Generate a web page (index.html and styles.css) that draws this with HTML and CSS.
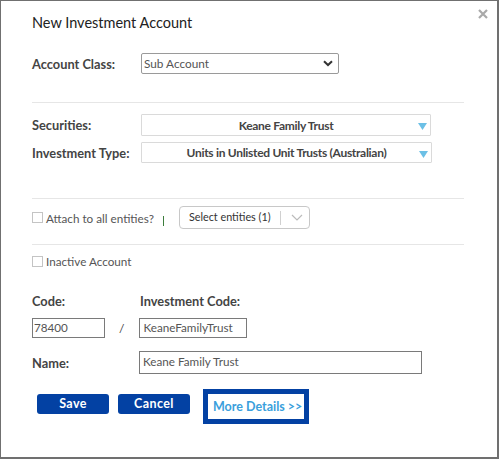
FILE: index.html
```html
<!DOCTYPE html>
<html>
<head>
<meta charset="utf-8">
<link rel="stylesheet" href="styles.css">
</head>
<body>
<div class="dialog">
  <svg class="close" width="10" height="10" viewBox="0 0 10 10"><path d="M1 1 L9 9 M9 1 L1 9" stroke="#a9a9a9" stroke-width="2.2"/></svg>
  <h1 class="title">New Investment Account</h1>

  <div class="row row-class">
    <label class="lbl">Account Class:</label>
    <div class="select-plain">
      <span>Sub Account</span>
      <svg class="chev" width="10" height="7" viewBox="0 0 10 7"><path d="M1 1.2 L5 5 L9 1.2" fill="none" stroke="#333" stroke-width="2"/></svg>
    </div>
  </div>

  <hr class="sep sep1">

  <div class="row row-sec">
    <label class="lbl">Securities:</label>
    <div class="combo combo-sec">
      <span class="combo-text">Keane Family Trust</span>
      <svg class="tri" width="9" height="7" viewBox="0 0 9 7"><path d="M0 0 H9 L4.5 7 Z" fill="#6cc0e6"/></svg>
    </div>
  </div>
  <div class="row row-type">
    <label class="lbl">Investment Type:</label>
    <div class="combo combo-type">
      <span class="combo-text">Units in Unlisted Unit Trusts (Australian)</span>
      <svg class="tri" width="9" height="7" viewBox="0 0 9 7"><path d="M0 0 H9 L4.5 7 Z" fill="#6cc0e6"/></svg>
    </div>
  </div>

  <hr class="sep sep2">

  <div class="row row-attach">
    <span class="cb"></span>
    <span class="cb-text">Attach to all entities?</span>
    <span class="bar"></span>
    <div class="multi">
      <span class="multi-text">Select entities (1)</span>
      <span class="multi-div"></span>
      <svg class="multi-chev" width="12" height="7" viewBox="0 0 12 7"><path d="M1 1 L6 6 L11 1" fill="none" stroke="#bbb" stroke-width="1.2"/></svg>
    </div>
  </div>

  <hr class="sep sep3">

  <div class="row row-inactive">
    <span class="cb"></span>
    <span class="cb-text">Inactive Account</span>
  </div>

  <div class="row row-codelbl">
    <label class="lbl lbl-code">Code:</label>
    <label class="lbl lbl-inv">Investment Code:</label>
  </div>
  <div class="row row-codes">
    <div class="input in-code">78400</div>
    <span class="slash">/</span>
    <div class="input in-inv">KeaneFamilyTrust</div>
  </div>
  <div class="row row-name">
    <label class="lbl lbl-name">Name:</label>
    <div class="input in-name">Keane Family Trust</div>
  </div>

  <div class="row row-btns">
    <button class="btn btn-save">Save</button>
    <button class="btn btn-cancel">Cancel</button>
    <div class="more">More Details &gt;&gt;</div>
  </div>
</div>
</body>
</html>
```

FILE: styles.css
```css
html, body {
  margin: 0;
  padding: 0;
  background: #fff;
}
body {
  font-family: Lato, "Liberation Sans", Arial, sans-serif;
  color: #555;
}
.dialog {
  position: relative;
  box-sizing: border-box;
  width: 499px;
  height: 459px;
  border: 1px solid #707070;
  border-right: 2px solid #707070;
  border-bottom: 2px solid #707070;
  padding: 0 34px 0 31px;
  background: #fff;
  white-space: nowrap;
}
.close {
  position: absolute;
  top: 8px;
  right: 9px;
}
.title {
  margin: 0;
  padding-top: 13px;
  font-size: 14.5px;
  font-weight: normal;
  color: #222;
  line-height: 18px;
}
.row {
  display: flex;
  align-items: center;
}
.lbl {
  font-size: 12.8px;
  font-weight: bold;
  color: #444;
  width: 109px;
  flex: none;
}
.row-class {
  margin-top: 21px;
  height: 21px;
}
.select-plain {
  box-sizing: border-box;
  width: 198px;
  height: 21px;
  border: 1px solid #9a9a9a;
  border-radius: 2px;
  display: flex;
  align-items: center;
  justify-content: space-between;
  padding: 0 5px 0 2px;
  font-size: 11.8px;
  color: #555;
}
.sep {
  border: 0;
  border-top: 1px solid #e6e6e6;
  margin: 0;
  width: 432px;
}
.sep1 { margin-top: 28px; }
.row-sec {
  margin-top: 11px;
  height: 22px;
}
.row-type {
  margin-top: 6px;
  height: 21px;
}
.combo {
  position: relative;
  box-sizing: border-box;
  height: 100%;
  border: 1px solid #dadada;
  border-radius: 1px;
  display: flex;
  align-items: center;
  justify-content: center;
  font-size: 12px;
  letter-spacing: -0.3px;
  font-weight: bold;
  color: #444;
}
.combo-sec { width: 290px; }
.combo-type { width: 291px; }
.tri {
  position: absolute;
  right: 3px;
  top: 8px;
}
.sep2 { margin-top: 35px; }
.row-attach {
  margin-top: 7px;
  height: 23px;
}
.cb {
  box-sizing: border-box;
  width: 11px;
  height: 11px;
  border: 1px solid #c4c4c4;
  flex: none;
}
.cb-text {
  font-size: 11.7px;
  color: #555;
  margin-left: 3px;
}
.bar {
  width: 1px;
  height: 10px;
  background: #3c7d3c;
  margin-left: 9px;
  margin-top: 6px;
}
.multi {
  box-sizing: border-box;
  margin-left: 15px;
  width: 131px;
  height: 23px;
  border: 1px solid #c8c8c8;
  border-radius: 4px;
  display: flex;
  align-items: center;
  padding-left: 9px;
}
.multi-text {
  font-size: 10.8px;
  color: #333;
  margin-top: -3px;
}
.multi-div {
  width: 1px;
  height: 14px;
  background: #d0d0d0;
  margin-left: 9px;
}
.multi-chev {
  margin-left: 10px;
}
.sep3 { margin-top: 15px; }
.row-inactive {
  margin-top: 9px;
  height: 14px;
}
.row-codelbl {
  margin-top: 25px;
  height: 16px;
}
.row-codelbl .lbl-code { width: 108px; }
.row-codes {
  margin-top: 9px;
  height: 20px;
}
.input {
  box-sizing: border-box;
  height: 100%;
  border: 1px solid #7a7a7a;
  font-size: 11.7px;
  color: #555;
  padding: 0 3px;
  display: flex;
  align-items: flex-start;
  line-height: 16px;
}
.in-code { width: 73px; padding-left: 1px; }
.slash {
  font-size: 12px;
  color: #444;
  margin-left: 14px;
  margin-right: 15px;
}
.in-inv { width: 108px; }
.row-name {
  margin-top: 13px;
  height: 23px;
}
.lbl-name { width: 107px; }
.in-name { width: 283px; padding-left: 3px; line-height: 18px; }
.row-btns {
  margin-top: 15px;
  height: 35px;
  align-items: flex-start;
}
.btn {
  box-sizing: border-box;
  height: 20px;
  width: 72px;
  margin-top: 5px;
  border: 0;
  border-radius: 3px;
  background: #0341a3;
  color: #fff;
  font-family: Lato, "Liberation Sans", Arial, sans-serif;
  font-size: 12.5px;
  font-weight: bold;
  padding: 0;
  line-height: 20px;
  letter-spacing: 0.4px;
}
.btn-save { margin-left: 5px; }
.btn-cancel { margin-left: 9px; }
.more {
  box-sizing: border-box;
  margin-left: 13px;
  width: 106px;
  height: 35px;
  border: 5px solid #0341a3;
  color: #3a9fdc;
  font-size: 12.5px;
  font-weight: bold;
  display: flex;
  align-items: center;
  padding-left: 5px;
}
```
